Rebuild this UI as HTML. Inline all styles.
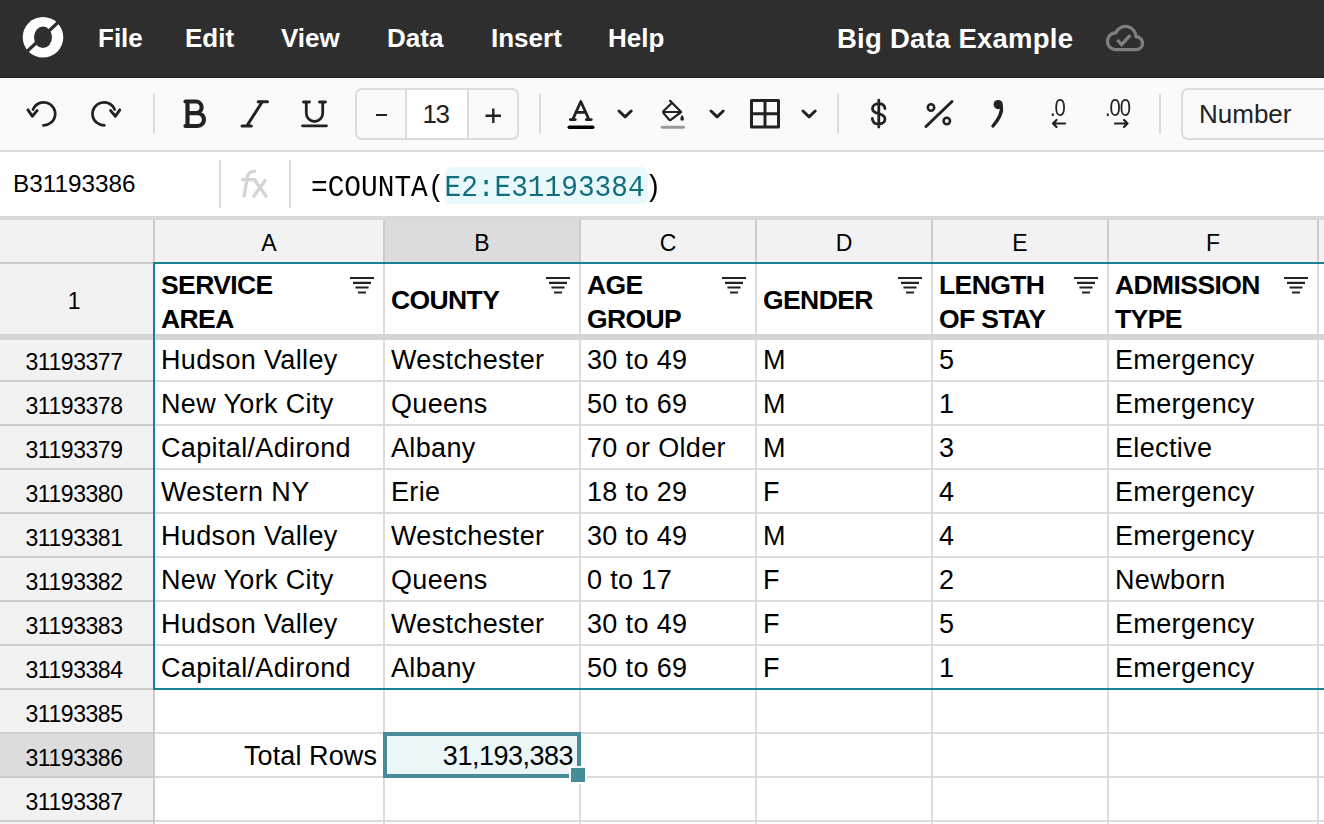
<!DOCTYPE html>
<html><head><meta charset="utf-8">
<style>
*{margin:0;padding:0;box-sizing:border-box}
html,body{width:1324px;height:824px;overflow:hidden;background:#fff;font-family:"Liberation Sans",sans-serif;color:#000}
.a{position:absolute}
.menu{top:0;height:77px;line-height:77px;color:#fff;font-weight:bold;font-size:26px;white-space:nowrap}
.sep{position:absolute;width:2px;background:#dcdcdc;top:94px;height:40px}
.t{position:absolute;white-space:nowrap;font-size:27px;line-height:44px;height:44px;color:#000;letter-spacing:0.35px}
.rh{position:absolute;white-space:nowrap;font-size:23px;line-height:44px;height:44px;width:148px;letter-spacing:-0.45px;padding-top:2px;text-align:center;color:#000;left:0}
.ch{position:absolute;white-space:nowrap;font-size:23px;line-height:42px;height:42px;text-align:center;color:#000;top:222px}
.hb{position:absolute;white-space:nowrap;font-size:26.5px;font-weight:bold;line-height:34px;color:#000;letter-spacing:-0.6px}
svg{position:absolute;overflow:visible}
</style></head>
<body>

<div class="a" style="left:0;top:0;width:1324px;height:77px;background:#2e2e2e"></div>
<div class="a" style="left:0;top:77px;width:1324px;height:1px;background:#232323"></div>
<div class="a menu" style="left:98px">File</div>
<div class="a menu" style="left:185px">Edit</div>
<div class="a menu" style="left:281px">View</div>
<div class="a menu" style="left:387px">Data</div>
<div class="a menu" style="left:491px">Insert</div>
<div class="a menu" style="left:608px">Help</div>
<div class="a menu" style="left:837px;font-size:27.5px;letter-spacing:0.25px">Big Data Example</div>
<svg style="left:0;top:0" width="90" height="77" viewBox="0 0 90 77">
<defs><mask id="lm"><rect width="90" height="77" fill="#fff"/><ellipse cx="43" cy="37.3" rx="9" ry="10.8" fill="#000"/><line x1="20" y1="58" x2="66" y2="15" stroke="#000" stroke-width="3.2"/></mask></defs>
<circle cx="43" cy="37.3" r="20.3" fill="#fff" mask="url(#lm)"/></svg>
<svg style="left:0;top:0" width="1324" height="77" viewBox="0 0 1324 77">
<path d="M1115.2 49.7 H1136.7 A6.5 6.5 0 0 0 1136 36.74 A10.5 10.5 0 0 0 1115.9 32.73 A8.5 8.5 0 0 0 1115.2 49.7 Z" fill="none" stroke="#7f7f7f" stroke-width="3.3" stroke-linejoin="round"/>
<path d="M1117.3 39.9 L1121.6 44.6 L1130.3 35.2" fill="none" stroke="#7f7f7f" stroke-width="3.3" stroke-linecap="butt" stroke-linejoin="miter"/></svg>
<div class="a" style="left:0;top:78px;width:1324px;height:72px;background:#fafafa"></div>
<div class="a" style="left:0;top:78px;width:1324px;height:1px;background:#fff"></div>
<div class="a" style="left:0;top:150px;width:1324px;height:2px;background:#d9d9d9"></div>
<div class="sep" style="left:153px"></div>
<div class="sep" style="left:539px"></div>
<div class="sep" style="left:837px"></div>
<div class="sep" style="left:1159px"></div>
<svg style="left:0;top:0" width="140" height="151" viewBox="0 0 140 151">
<path d="M43.4 125.3 A11.5 11.5 0 1 0 33 109.6" fill="none" stroke="#222" stroke-width="2.7" stroke-linecap="round"/>
<path d="M27.9 109.9 L32.3 116.2 L37.1 110.6" fill="none" stroke="#222" stroke-width="2.9" stroke-linecap="round" stroke-linejoin="round"/>
<path d="M104.3 125.3 A11.5 11.5 0 1 1 114.7 109.6" fill="none" stroke="#222" stroke-width="2.7" stroke-linecap="round"/>
<path d="M119.8 109.9 L115.4 116.2 L110.6 110.6" fill="none" stroke="#222" stroke-width="2.9" stroke-linecap="round" stroke-linejoin="round"/>
</svg>
<svg style="left:170px;top:79px" width="170" height="72" viewBox="170 79 170 72">
<path d="M187.5 101.5 H195.8 A5.85 5.85 0 0 1 195.8 113.2 H187.5 M187.5 113.2 H197.6 A6.4 6.4 0 0 1 197.6 126 H187.5 M187.5 101.5 V126 M185.5 101.5 H188 M185.5 126 H188" fill="none" stroke="#222" stroke-width="4.2" stroke-linejoin="round" stroke-linecap="round"/>
<path d="M262.3 101.7 L246.8 126 M258.2 101.7 H267.5 M242 126 H251.3" fill="none" stroke="#222" stroke-width="3" stroke-linecap="round"/>
<path d="M303.5 102 H309.5 M319.5 102 H325.5 M306.3 102 V113.3 A8.2 8.2 0 0 0 322.7 113.3 V102 M302.5 125.8 H326.5" fill="none" stroke="#222" stroke-width="2.8" stroke-linecap="round"/>
</svg>
<div class="a" style="left:355px;top:88px;width:164px;height:52px;border:2px solid #dcdcdc;border-radius:7px;background:#fafafa"></div>
<div class="a" style="left:405px;top:90px;width:64px;height:48px;background:#fff;border-left:2px solid #dcdcdc;border-right:2px solid #dcdcdc"></div>
<div class="a" style="left:376px;top:114px;width:10.5px;height:2.4px;background:#222"></div>
<div class="a" style="left:404px;top:89.5px;width:64px;height:48px;line-height:48px;text-align:center;font-size:26px;color:#222;letter-spacing:-1.5px;text-indent:-1px">13</div>
<svg style="left:0;top:0" width="520" height="151" viewBox="0 0 520 151"><path d="M485.5 115.8 H501 M493.3 108.6 V123" stroke="#222" stroke-width="2.4"/></svg>
<svg style="left:550px;top:79px" width="280" height="72" viewBox="550 79 280 72">
<path d="M572.7 119.6 L580.8 101.5 L589 119.6 M575.8 112.4 H585.8 M570.3 119.6 H575.3 M586.3 119.6 H591.3" fill="none" stroke="#222" stroke-width="2.8" stroke-linecap="round" stroke-linejoin="round"/>
<rect x="567.5" y="125.5" width="27" height="3.5" rx="1.75" fill="#000"/>
<path d="M619.0 111 L625.1 116.8 L631.2 111" fill="none" stroke="#222" stroke-width="3" stroke-linecap="round" stroke-linejoin="round"/>
<path d="M670.1 100.9 L681.2 112 L670.8 119.8 Q670 120.4 669.2 119.7 L663.5 113 Q662.8 112 663.5 111 L671.6 103.2 M663.2 112 H681.2" fill="none" stroke="#222" stroke-width="2.2" stroke-linejoin="round" stroke-linecap="round"/>
<path d="M682.1 114.8 Q680.2 117.6 680.3 118.8 A1.85 1.85 0 0 0 684 118.8 Q684 117.6 682.1 114.8 Z" fill="#222"/>
<rect x="660.7" y="125.8" width="24.4" height="2.9" rx="1.45" fill="#999"/>
<path d="M711.0 111 L717.1 116.8 L723.2 111" fill="none" stroke="#222" stroke-width="3" stroke-linecap="round" stroke-linejoin="round"/>
<path d="M751.5 100.5 H778.5 V127 H751.5 Z M765 100.5 V127 M751.5 113.8 H778.5" fill="none" stroke="#222" stroke-width="3" stroke-linejoin="round"/>
<path d="M803.0 111 L809.1 116.8 L815.2 111" fill="none" stroke="#222" stroke-width="3" stroke-linecap="round" stroke-linejoin="round"/>
</svg>
<svg style="left:850px;top:79px" width="300" height="72" viewBox="850 79 300 72">
<path d="M885 108.5 C884.5 105.5 882 103.7 878.8 103.7 C875 103.7 872.5 106 872.5 108.7 C872.5 111.5 875 112.7 878.8 113.7 C882.5 114.7 885 116.2 885 119 C885 122 882.3 124 878.8 124 C875 124 872.5 121.8 872.3 118.5 M878.8 100.2 V127" fill="none" stroke="#222" stroke-width="2.8" stroke-linecap="round"/>
<path d="M952 101.5 L926 126.5" fill="none" stroke="#222" stroke-width="3" stroke-linecap="round"/>
<circle cx="931" cy="107.5" r="3.2" fill="none" stroke="#222" stroke-width="2.6"/>
<circle cx="946.8" cy="121" r="3.2" fill="none" stroke="#222" stroke-width="2.6"/>
<path d="M1001.3 106 C1002.5 112 999 119 993 126" fill="none" stroke="#222" stroke-width="3.4" stroke-linecap="round"/>
<circle cx="998.2" cy="104.6" r="4.6" fill="#222"/>
<path d="M1053 123.5 H1065 M1056.5 120 L1053 123.5 L1056.5 127" fill="none" stroke="#222" stroke-width="2.2" stroke-linecap="round" stroke-linejoin="round"/>
<path d="M1115 123.5 H1127.5 M1124 120 L1127.5 123.5 L1124 127" fill="none" stroke="#222" stroke-width="2.2" stroke-linecap="round" stroke-linejoin="round"/>
</svg>
<div class="a" style="left:1050px;top:96px;font-size:23px;line-height:24px;color:#222;letter-spacing:-1.2px;transform:scaleX(0.88);transform-origin:0 0">.0</div>
<div class="a" style="left:1105px;top:96px;font-size:23px;line-height:24px;color:#222;letter-spacing:-1.2px;transform:scaleX(0.88);transform-origin:0 0">.00</div>
<div class="a" style="left:1181px;top:88px;width:200px;height:52px;border:2px solid #dcdcdc;border-radius:7px;background:#fafafa"></div>
<div class="a" style="left:1199px;top:90px;height:48px;line-height:48px;font-size:26px;color:#222">Number</div>
<div class="a" style="left:0;top:152px;width:1324px;height:64px;background:#fff"></div>
<div class="a" style="left:0;top:216px;width:1324px;height:4px;background:#d9d9d9"></div>
<div class="a" style="left:219px;top:160px;width:2px;height:48px;background:#dcdcdc"></div>
<div class="a" style="left:289px;top:160px;width:2px;height:48px;background:#dcdcdc"></div>
<div class="a" style="left:13px;top:152px;height:64px;line-height:64px;font-size:24.3px;color:#000">B31193386</div>
<svg style="left:0;top:0" width="300" height="220" viewBox="0 0 300 220"><path d="M241.3 179.6 H256.5 M243.9 197.3 L247.4 176.5 Q248.6 171.6 253.8 171.3 H256 M254.3 179.4 L266.8 197.3 M266 179.4 L253 197.3" fill="none" stroke="#d4d4d4" stroke-width="3.3"/></svg>
<div class="a" style="left:445px;top:167px;width:203px;height:37px;border-radius:7px;background:#e9f8fb"></div>
<div class="a" style="left:311px;top:157px;height:64px;line-height:64px;font-size:27.8px;color:#000;font-family:'Liberation Mono',monospace;white-space:nowrap;transform:scaleY(1.08);transform-origin:0 42px">=COUNTA(<span style="color:#106e7c">E2:E31193384</span>)</div>
<div class="a" style="left:0;top:220px;width:1324px;height:42px;background:#f2f2f2"></div>
<div class="a" style="left:385px;top:220px;width:194px;height:42px;background:#dcdcdc"></div>
<div class="a" style="left:0;top:264px;width:153px;height:560px;background:#f2f2f2"></div>
<div class="a" style="left:0;top:734px;width:153px;height:42px;background:#dcdcdc"></div>
<div class="a" style="left:153px;top:220px;width:2px;height:42px;background:#cccccc"></div>
<div class="a" style="left:383px;top:220px;width:2px;height:42px;background:#cccccc"></div>
<div class="a" style="left:579px;top:220px;width:2px;height:42px;background:#cccccc"></div>
<div class="a" style="left:755px;top:220px;width:2px;height:42px;background:#cccccc"></div>
<div class="a" style="left:931px;top:220px;width:2px;height:42px;background:#cccccc"></div>
<div class="a" style="left:1107px;top:220px;width:2px;height:42px;background:#cccccc"></div>
<div class="a" style="left:1317px;top:220px;width:2px;height:42px;background:#cccccc"></div>
<div class="a" style="left:383px;top:264px;width:2px;height:560px;background:#dcdcdc"></div>
<div class="a" style="left:579px;top:264px;width:2px;height:560px;background:#dcdcdc"></div>
<div class="a" style="left:755px;top:264px;width:2px;height:560px;background:#dcdcdc"></div>
<div class="a" style="left:931px;top:264px;width:2px;height:560px;background:#dcdcdc"></div>
<div class="a" style="left:1107px;top:264px;width:2px;height:560px;background:#dcdcdc"></div>
<div class="a" style="left:1317px;top:264px;width:2px;height:560px;background:#dcdcdc"></div>
<div class="a" style="left:153px;top:264px;width:2px;height:560px;background:#cccccc"></div>
<div class="a" style="left:0;top:262px;width:1324px;height:2px;background:#cccccc"></div>
<div class="a" style="left:0;top:380px;width:153px;height:2px;background:#cccccc"></div>
<div class="a" style="left:155px;top:380px;width:1169px;height:2px;background:#dcdcdc"></div>
<div class="a" style="left:0;top:424px;width:153px;height:2px;background:#cccccc"></div>
<div class="a" style="left:155px;top:424px;width:1169px;height:2px;background:#dcdcdc"></div>
<div class="a" style="left:0;top:468px;width:153px;height:2px;background:#cccccc"></div>
<div class="a" style="left:155px;top:468px;width:1169px;height:2px;background:#dcdcdc"></div>
<div class="a" style="left:0;top:512px;width:153px;height:2px;background:#cccccc"></div>
<div class="a" style="left:155px;top:512px;width:1169px;height:2px;background:#dcdcdc"></div>
<div class="a" style="left:0;top:556px;width:153px;height:2px;background:#cccccc"></div>
<div class="a" style="left:155px;top:556px;width:1169px;height:2px;background:#dcdcdc"></div>
<div class="a" style="left:0;top:600px;width:153px;height:2px;background:#cccccc"></div>
<div class="a" style="left:155px;top:600px;width:1169px;height:2px;background:#dcdcdc"></div>
<div class="a" style="left:0;top:644px;width:153px;height:2px;background:#cccccc"></div>
<div class="a" style="left:155px;top:644px;width:1169px;height:2px;background:#dcdcdc"></div>
<div class="a" style="left:0;top:688px;width:153px;height:2px;background:#cccccc"></div>
<div class="a" style="left:155px;top:688px;width:1169px;height:2px;background:#dcdcdc"></div>
<div class="a" style="left:0;top:732px;width:153px;height:2px;background:#cccccc"></div>
<div class="a" style="left:155px;top:732px;width:1169px;height:2px;background:#dcdcdc"></div>
<div class="a" style="left:0;top:776px;width:153px;height:2px;background:#cccccc"></div>
<div class="a" style="left:155px;top:776px;width:1169px;height:2px;background:#dcdcdc"></div>
<div class="a" style="left:0;top:820px;width:153px;height:2px;background:#cccccc"></div>
<div class="a" style="left:155px;top:820px;width:1169px;height:2px;background:#dcdcdc"></div>
<div class="a" style="left:0;top:334px;width:1324px;height:6px;background:#d4d4d4"></div>
<div class="ch" style="left:155px;width:228px">A</div>
<div class="ch" style="left:385px;width:194px">B</div>
<div class="ch" style="left:581px;width:174px">C</div>
<div class="ch" style="left:757px;width:174px">D</div>
<div class="ch" style="left:933px;width:174px">E</div>
<div class="ch" style="left:1109px;width:208px">F</div>
<div class="ch" style="left:1319px;width:60px">G</div>
<div class="rh" style="top:277px">1</div>
<div class="hb" style="left:161px;top:268px">SERVICE<br>AREA</div>
<svg style="left:349px;top:276px" width="26" height="20" viewBox="0 0 26 20"><path d="M1 2 H25 M4 6.8 H22 M6.5 11.5 H19.5 M9 16.5 H17" stroke="#222" stroke-width="2.2" stroke-linecap="butt"/></svg>
<div class="hb" style="left:391px;top:283px">COUNTY</div>
<svg style="left:545px;top:276px" width="26" height="20" viewBox="0 0 26 20"><path d="M1 2 H25 M4 6.8 H22 M6.5 11.5 H19.5 M9 16.5 H17" stroke="#222" stroke-width="2.2" stroke-linecap="butt"/></svg>
<div class="hb" style="left:587px;top:268px">AGE<br>GROUP</div>
<svg style="left:721px;top:276px" width="26" height="20" viewBox="0 0 26 20"><path d="M1 2 H25 M4 6.8 H22 M6.5 11.5 H19.5 M9 16.5 H17" stroke="#222" stroke-width="2.2" stroke-linecap="butt"/></svg>
<div class="hb" style="left:763px;top:283px">GENDER</div>
<svg style="left:897px;top:276px" width="26" height="20" viewBox="0 0 26 20"><path d="M1 2 H25 M4 6.8 H22 M6.5 11.5 H19.5 M9 16.5 H17" stroke="#222" stroke-width="2.2" stroke-linecap="butt"/></svg>
<div class="hb" style="left:939px;top:268px">LENGTH<br>OF STAY</div>
<svg style="left:1073px;top:276px" width="26" height="20" viewBox="0 0 26 20"><path d="M1 2 H25 M4 6.8 H22 M6.5 11.5 H19.5 M9 16.5 H17" stroke="#222" stroke-width="2.2" stroke-linecap="butt"/></svg>
<div class="hb" style="left:1115px;top:268px">ADMISSION<br>TYPE</div>
<svg style="left:1283px;top:276px" width="26" height="20" viewBox="0 0 26 20"><path d="M1 2 H25 M4 6.8 H22 M6.5 11.5 H19.5 M9 16.5 H17" stroke="#222" stroke-width="2.2" stroke-linecap="butt"/></svg>
<div class="rh" style="top:338px">31193377</div>
<div class="t" style="left:161px;top:338px">Hudson Valley</div>
<div class="t" style="left:391px;top:338px">Westchester</div>
<div class="t" style="left:587px;top:338px">30 to 49</div>
<div class="t" style="left:763px;top:338px">M</div>
<div class="t" style="left:939px;top:338px">5</div>
<div class="t" style="left:1115px;top:338px">Emergency</div>
<div class="rh" style="top:382px">31193378</div>
<div class="t" style="left:161px;top:382px">New York City</div>
<div class="t" style="left:391px;top:382px">Queens</div>
<div class="t" style="left:587px;top:382px">50 to 69</div>
<div class="t" style="left:763px;top:382px">M</div>
<div class="t" style="left:939px;top:382px">1</div>
<div class="t" style="left:1115px;top:382px">Emergency</div>
<div class="rh" style="top:426px">31193379</div>
<div class="t" style="left:161px;top:426px">Capital/Adirond</div>
<div class="t" style="left:391px;top:426px">Albany</div>
<div class="t" style="left:587px;top:426px">70 or Older</div>
<div class="t" style="left:763px;top:426px">M</div>
<div class="t" style="left:939px;top:426px">3</div>
<div class="t" style="left:1115px;top:426px">Elective</div>
<div class="rh" style="top:470px">31193380</div>
<div class="t" style="left:161px;top:470px">Western NY</div>
<div class="t" style="left:391px;top:470px">Erie</div>
<div class="t" style="left:587px;top:470px">18 to 29</div>
<div class="t" style="left:763px;top:470px">F</div>
<div class="t" style="left:939px;top:470px">4</div>
<div class="t" style="left:1115px;top:470px">Emergency</div>
<div class="rh" style="top:514px">31193381</div>
<div class="t" style="left:161px;top:514px">Hudson Valley</div>
<div class="t" style="left:391px;top:514px">Westchester</div>
<div class="t" style="left:587px;top:514px">30 to 49</div>
<div class="t" style="left:763px;top:514px">M</div>
<div class="t" style="left:939px;top:514px">4</div>
<div class="t" style="left:1115px;top:514px">Emergency</div>
<div class="rh" style="top:558px">31193382</div>
<div class="t" style="left:161px;top:558px">New York City</div>
<div class="t" style="left:391px;top:558px">Queens</div>
<div class="t" style="left:587px;top:558px">0 to 17</div>
<div class="t" style="left:763px;top:558px">F</div>
<div class="t" style="left:939px;top:558px">2</div>
<div class="t" style="left:1115px;top:558px">Newborn</div>
<div class="rh" style="top:602px">31193383</div>
<div class="t" style="left:161px;top:602px">Hudson Valley</div>
<div class="t" style="left:391px;top:602px">Westchester</div>
<div class="t" style="left:587px;top:602px">30 to 49</div>
<div class="t" style="left:763px;top:602px">F</div>
<div class="t" style="left:939px;top:602px">5</div>
<div class="t" style="left:1115px;top:602px">Emergency</div>
<div class="rh" style="top:646px">31193384</div>
<div class="t" style="left:161px;top:646px">Capital/Adirond</div>
<div class="t" style="left:391px;top:646px">Albany</div>
<div class="t" style="left:587px;top:646px">50 to 69</div>
<div class="t" style="left:763px;top:646px">F</div>
<div class="t" style="left:939px;top:646px">1</div>
<div class="t" style="left:1115px;top:646px">Emergency</div>
<div class="rh" style="top:690px">31193385</div>
<div class="rh" style="top:734px">31193386</div>
<div class="rh" style="top:778px">31193387</div>
<div class="rh" style="top:822px">31193388</div>
<div class="t" style="left:155px;top:734px;width:222px;text-align:right;letter-spacing:0.1px">Total Rows</div>
<div class="a" style="left:383px;top:732px;width:198px;height:46px;border:4px solid #468c99;background:#ebf6f8"></div>
<div class="t" style="left:387px;top:734px;width:186px;text-align:right;letter-spacing:-0.5px">31,193,383</div>
<div class="a" style="left:569px;top:766px;width:18px;height:18px;border:2px solid #fff;background:#468c99"></div>
<div class="a" style="left:153px;top:262px;width:1171px;height:2px;background:#1a8093"></div>
<div class="a" style="left:153px;top:688px;width:1171px;height:2px;background:#1a8093"></div>
<div class="a" style="left:153px;top:262px;width:2px;height:428px;background:#1a8093"></div>
</body></html>
